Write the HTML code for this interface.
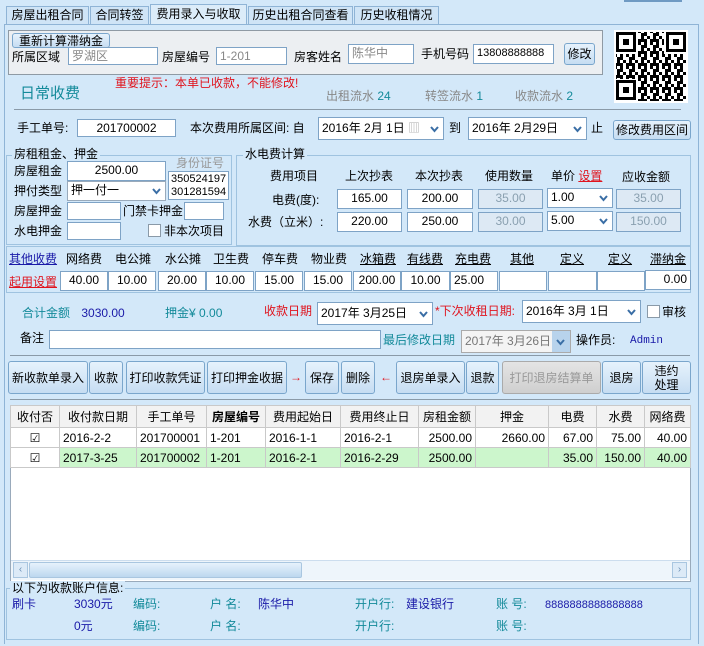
<!DOCTYPE html>
<html><head><meta charset="utf-8">
<style>
*{box-sizing:border-box;margin:0;padding:0}
body{width:704px;height:646px;overflow:hidden;background:#d3e8f9;font-family:"Liberation Sans","Noto Sans CJK SC",sans-serif;font-size:12px;color:#000;position:relative}
.a{position:absolute;white-space:nowrap;line-height:14px}
.in{position:absolute;background:#fff;border:1px solid #7ea3c6;font-size:12px;line-height:16px;padding:0 3px;white-space:nowrap;overflow:hidden}
.dis{background:#dde9f4;color:#8aa0b0;text-align:center}
.c{text-align:center}.r{text-align:right}
.btn{position:absolute;border:1px solid #7aa6cc;border-radius:3px;background:linear-gradient(#e6f2fc,#c6ddf2);text-align:center;font-size:12px;color:#000;display:flex;align-items:center;justify-content:center;line-height:14px;white-space:nowrap}
.tab{position:absolute;top:6px;height:19px;border:1px solid #8fb4d6;border-bottom:none;background:#cfe4f6;font-size:12px;line-height:17px;text-align:center;white-space:nowrap}
.teal{color:#138a9a}.blue{color:#1a1aa8}.red{color:#e0141e}.gray{color:#888}
.dd{position:absolute;right:4px;top:3px;width:9px;height:9px}
.fs{position:absolute;border:1px solid #9fc3e0}
.leg{position:absolute;background:#d3e8f9;padding:0 2px;font-size:12px;line-height:14px}
table{border-collapse:collapse;position:absolute;left:10px;top:405px;font-size:12px}
td{border:1px solid #c9c9c9;height:20px;padding:0 3px;white-space:nowrap}
th{border:1px solid #c9c9c9;height:22px;background:#f2f2f2;font-weight:normal;padding:0;white-space:nowrap}
.g td{background:#ccf6cc}
.ul{text-decoration:underline}
</style></head><body>
<div class="a" style="left:624px;top:0;width:58px;height:2px;background:#6f9ac3"></div>
<div class="tab" style="left:6px;width:83px">房屋出租合同</div>
<div class="tab" style="left:90px;width:59px">合同转签</div>
<div class="tab" style="left:150px;top:4px;height:21px;width:97px;background:#dcecf9;line-height:19px">费用录入与收取</div>
<div class="tab" style="left:248px;width:105px">历史出租合同查看</div>
<div class="tab" style="left:354px;width:85px">历史收租情况</div>
<div class="a" style="left:4px;top:24px;width:695px;height:620px;border:1px solid #8fb4d6;border-bottom:none"></div>
<div class="a" style="left:8px;top:30px;width:595px;height:45px;background:#eceff2;border:1px solid #8f9aa4"></div>
<div class="btn" style="left:12px;top:33px;width:98px;height:15px">重新计算滞纳金</div>
<div class="a" style="left:12px;top:50px">所属区域</div>
<div class="in" style="left:68px;top:47px;width:90px;height:18px;color:#888">罗湖区</div>
<div class="a" style="left:162px;top:50px">房屋编号</div>
<div class="in" style="left:216px;top:47px;width:71px;height:18px;color:#888">1-201</div>
<div class="a" style="left:294px;top:50px">房客姓名</div>
<div class="in" style="left:348px;top:44px;width:66px;height:20px;color:#888">陈华中</div>
<div class="a" style="left:421px;top:47px">手机号码</div>
<div class="in" style="left:473px;top:44px;width:81px;height:20px;font-size:11px">13808888888</div>
<div class="btn" style="left:564px;top:43px;width:31px;height:22px">修改</div>
<svg class="a" style="left:614px;top:30px" width="74" height="73" viewBox="0 0 74 73">
<defs><pattern id="q" width="12" height="12" patternUnits="userSpaceOnUse">
<rect x="0" y="0" width="3" height="3"/><rect x="6" y="0" width="3" height="6"/><rect x="3" y="3" width="3" height="3"/><rect x="9" y="6" width="3" height="3"/><rect x="0" y="9" width="6" height="3"/><rect x="6" y="9" width="3" height="3"/><rect x="3" y="6" width="3" height="3"/></pattern></defs>
<rect width="74" height="73" fill="#fff"/>
<rect x="2" y="2" width="70" height="69" fill="url(#q)"/>
<g fill="#fff"><rect x="1" y="1" width="23" height="23"/><rect x="50" y="1" width="23" height="23"/><rect x="1" y="49" width="23" height="23"/></g>
<g fill="none" stroke="#000" stroke-width="3"><rect x="3.5" y="3.5" width="17" height="17"/><rect x="53.5" y="3.5" width="17" height="17"/><rect x="3.5" y="51.5" width="17" height="17"/></g>
<rect x="9" y="9" width="6" height="6"/><rect x="59" y="9" width="6" height="6"/><rect x="9" y="57" width="6" height="6"/>
</svg>
<div class="a red" style="left:115px;top:76px">重要提示：本单已收款，不能修改!</div>
<div class="a teal" style="left:20px;top:85px;font-size:15px;line-height:18px">日常收费</div>
<div class="a gray" style="left:326px;top:89px">出租流水 <span class="teal">24</span></div>
<div class="a gray" style="left:425px;top:89px">转签流水 <span class="teal">1</span></div>
<div class="a gray" style="left:515px;top:89px">收款流水 <span class="teal">2</span></div>
<div class="a" style="left:14px;top:109px;width:667px;height:1px;background:#8a9aa8"></div>
<div class="a" style="left:17px;top:121px">手工单号:</div>
<div class="in c" style="left:77px;top:119px;width:99px;height:18px">201700002</div>
<div class="a" style="left:190px;top:121px">本次费用所属区间: 自</div>
<div class="in" style="left:318px;top:117px;width:126px;height:23px;line-height:21px">2016年 2月 1日 <span style="color:#aaa">▥</span><svg class="dd" style="top:7px" viewBox="0 0 9 9"><path d="M1 2l3.5 4 3.5-4" stroke="#3a6ea5" stroke-width="2" fill="none"/></svg></div>
<div class="a" style="left:449px;top:121px">到</div>
<div class="in" style="left:468px;top:117px;width:119px;height:23px;line-height:21px">2016年 2月29日<svg class="dd" style="top:7px" viewBox="0 0 9 9"><path d="M1 2l3.5 4 3.5-4" stroke="#3a6ea5" stroke-width="2" fill="none"/></svg></div>
<div class="a" style="left:591px;top:121px">止</div>
<div class="btn" style="left:613px;top:120px;width:78px;height:20px">修改费用区间</div>
<div class="fs" style="left:6px;top:155px;width:226px;height:90px"></div>
<div class="leg" style="left:12px;top:147px">房租租金、押金</div>
<div class="a" style="left:14px;top:164px">房屋租金</div>
<div class="in c" style="left:67px;top:161px;width:99px;height:20px">2500.00</div>
<div class="a" style="left:176px;top:156px;color:#999">身份证号</div>
<div class="in" style="left:168px;top:171px;width:61px;height:29px;line-height:13px;padding:1px 2px;font-size:11px">350524197<br>301281594</div>
<div class="a" style="left:14px;top:184px">押付类型</div>
<div class="in" style="left:67px;top:181px;width:99px;height:20px;border-color:#9ab">押一付一<svg class="dd" style="top:5px" viewBox="0 0 9 9"><path d="M1 2l3.5 4 3.5-4" stroke="#3a6ea5" stroke-width="2" fill="none"/></svg></div>
<div class="a" style="left:14px;top:204px">房屋押金</div>
<div class="in" style="left:67px;top:202px;width:54px;height:18px"></div>
<div class="a" style="left:123px;top:204px">门禁卡押金</div>
<div class="in" style="left:184px;top:202px;width:40px;height:18px"></div>
<div class="a" style="left:14px;top:224px">水电押金</div>
<div class="in" style="left:67px;top:222px;width:54px;height:18px"></div>
<div class="a" style="left:148px;top:224px;width:13px;height:13px;background:#fff;border:1px solid #8a9aa8"></div>
<div class="a" style="left:164px;top:224px">非本次项目</div>
<div class="fs" style="left:236px;top:155px;width:455px;height:91px"></div>
<div class="leg" style="left:243px;top:147px">水电费计算</div>
<div class="a" style="left:270px;top:169px">费用项目</div>
<div class="a" style="left:345px;top:169px">上次抄表</div>
<div class="a" style="left:415px;top:169px">本次抄表</div>
<div class="a" style="left:485px;top:169px">使用数量</div>
<div class="a" style="left:551px;top:169px">单价 <span class="red ul">设置</span></div>
<div class="a" style="left:622px;top:170px">应收金额</div>
<div class="a" style="left:272px;top:193px">电费(度):</div>
<div class="a" style="left:248px;top:215px">水费（立米）:</div>
<div class="in c" style="left:337px;top:189px;width:65px;height:20px">165.00</div>
<div class="in c" style="left:407px;top:189px;width:66px;height:20px">200.00</div>
<div class="in dis" style="left:478px;top:189px;width:65px;height:20px">35.00</div>
<div class="in" style="left:547px;top:188px;width:66px;height:20px">1.00<svg class="dd" style="top:5px" viewBox="0 0 9 9"><path d="M1 2l3.5 4 3.5-4" stroke="#3a6ea5" stroke-width="2" fill="none"/></svg></div>
<div class="in dis" style="left:616px;top:189px;width:65px;height:20px">35.00</div>
<div class="in c" style="left:337px;top:212px;width:65px;height:20px">220.00</div>
<div class="in c" style="left:407px;top:212px;width:66px;height:20px">250.00</div>
<div class="in dis" style="left:478px;top:212px;width:65px;height:20px">30.00</div>
<div class="in" style="left:547px;top:211px;width:66px;height:20px">5.00<svg class="dd" style="top:5px" viewBox="0 0 9 9"><path d="M1 2l3.5 4 3.5-4" stroke="#3a6ea5" stroke-width="2" fill="none"/></svg></div>
<div class="in dis" style="left:616px;top:212px;width:65px;height:20px">150.00</div>
<div class="fs" style="left:6px;top:246px;width:685px;height:47px"></div>
<div class="a blue ul" style="left:9px;top:252px">其他收费</div>
<div class="a red ul" style="left:9px;top:275px">起用设置</div>
<div class="a" style="left:66px;top:252px">网络费</div>
<div class="a" style="left:115px;top:252px">电公摊</div>
<div class="a" style="left:165px;top:252px">水公摊</div>
<div class="a" style="left:213px;top:252px">卫生费</div>
<div class="a" style="left:262px;top:252px">停车费</div>
<div class="a" style="left:311px;top:252px">物业费</div>
<div class="a ul" style="left:360px;top:252px">冰箱费</div>
<div class="a ul" style="left:407px;top:252px">有线费</div>
<div class="a ul" style="left:455px;top:252px">充电费</div>
<div class="a ul" style="left:510px;top:252px">其他</div>
<div class="a ul" style="left:560px;top:252px">定义</div>
<div class="a ul" style="left:608px;top:252px">定义</div>
<div class="a ul" style="left:650px;top:252px">滞纳金</div>
<div class="in c" style="left:60px;top:271px;width:48px;height:20px">40.00</div>
<div class="in c" style="left:108px;top:271px;width:48px;height:20px">10.00</div>
<div class="in c" style="left:158px;top:271px;width:48px;height:20px">20.00</div>
<div class="in c" style="left:206px;top:271px;width:48px;height:20px">10.00</div>
<div class="in c" style="left:255px;top:271px;width:48px;height:20px">15.00</div>
<div class="in c" style="left:304px;top:271px;width:48px;height:20px">15.00</div>
<div class="in c" style="left:353px;top:271px;width:48px;height:20px">200.00</div>
<div class="in c" style="left:401px;top:271px;width:49px;height:20px">10.00</div>
<div class="in" style="left:450px;top:271px;width:48px;height:20px">25.00</div>
<div class="in" style="left:499px;top:271px;width:48px;height:20px"></div>
<div class="in" style="left:548px;top:271px;width:49px;height:20px"></div>
<div class="in" style="left:597px;top:271px;width:48px;height:20px"></div>
<div class="in r" style="left:645px;top:270px;width:46px;height:20px">0.00</div>
<div class="a teal" style="left:22px;top:306px">合计金额 <span class="blue" style="margin-left:8px">3030.00</span></div>
<div class="a teal" style="left:165px;top:306px">押金¥ 0.00</div>
<div class="a red" style="left:264px;top:304px">收款日期</div>
<div class="in" style="left:317px;top:302px;width:116px;height:23px;line-height:21px">2017年 3月25日<svg class="dd" style="top:7px" viewBox="0 0 9 9"><path d="M1 2l3.5 4 3.5-4" stroke="#3a6ea5" stroke-width="2" fill="none"/></svg></div>
<div class="a red" style="left:435px;top:304px">*下次收租日期:</div>
<div class="in" style="left:522px;top:300px;width:119px;height:23px;line-height:21px">2016年 3月 1日<svg class="dd" style="top:7px" viewBox="0 0 9 9"><path d="M1 2l3.5 4 3.5-4" stroke="#3a6ea5" stroke-width="2" fill="none"/></svg></div>
<div class="a" style="left:647px;top:305px;width:13px;height:13px;background:#fff;border:1px solid #8a9aa8"></div>
<div class="a" style="left:662px;top:305px">审核</div>
<div class="a" style="left:20px;top:331px">备注</div>
<div class="in" style="left:49px;top:330px;width:332px;height:19px"></div>
<div class="a teal" style="left:383px;top:333px">最后修改日期</div>
<div class="in" style="left:461px;top:330px;width:110px;height:23px;line-height:21px;color:#777;background:#f4f4f4;border-color:#aaa">2017年 3月26日<span style="position:absolute;right:0;top:0;width:18px;height:21px;background:#b8d3ec"></span><svg class="dd" style="top:7px;right:5px" viewBox="0 0 9 9"><path d="M1 2l3.5 4 3.5-4" stroke="#3a6ea5" stroke-width="2" fill="none"/></svg></div>
<div class="a" style="left:576px;top:333px">操作员:</div>
<div class="a blue" style="left:630px;top:334px;font-family:'Liberation Mono',monospace;font-size:11px">Admin</div>
<div class="a" style="left:10px;top:355px;width:680px;height:1px;background:#8a9aa8"></div>
<div class="btn" style="left:8px;top:361px;width:80px;height:33px">新收款单录入</div>
<div class="btn" style="left:89px;top:361px;width:34px;height:33px">收款</div>
<div class="btn" style="left:126px;top:361px;width:79px;height:33px">打印收款凭证</div>
<div class="btn" style="left:207px;top:361px;width:80px;height:33px">打印押金收据</div>
<div class="a red" style="left:290px;top:370px">→</div>
<div class="btn" style="left:305px;top:361px;width:34px;height:33px">保存</div>
<div class="btn" style="left:341px;top:361px;width:34px;height:33px">删除</div>
<div class="a red" style="left:380px;top:370px">←</div>
<div class="btn" style="left:396px;top:361px;width:69px;height:33px">退房单录入</div>
<div class="btn" style="left:466px;top:361px;width:33px;height:33px">退款</div>
<div class="btn" style="left:502px;top:361px;width:99px;height:33px;color:#999;background:linear-gradient(#e4e4e4,#cfcfcf);border-color:#aaa">打印退房结算单</div>
<div class="btn" style="left:602px;top:361px;width:39px;height:33px">退房</div>
<div class="btn" style="left:642px;top:361px;width:49px;height:33px;white-space:normal">违约<br>处理</div>
<div class="a" style="left:10px;top:399px;width:680px;height:1px;background:#8a9aa8"></div>
<div class="a" style="left:10px;top:405px;width:681px;height:177px;background:#fff;border:1px solid #9ab"></div>
<table>
<tr><th style="width:49px">收付否</th><th style="width:77px">收付款日期</th><th style="width:70px">手工单号</th><th style="width:59px;font-weight:bold">房屋编号</th><th style="width:75px">费用起始日</th><th style="width:78px">费用终止日</th><th style="width:57px">房租金额</th><th style="width:73px">押金</th><th style="width:48px">电费</th><th style="width:48px">水费</th><th style="width:46px">网络费</th></tr>
<tr><td class="c">☑</td><td>2016-2-2</td><td>201700001</td><td>1-201</td><td>2016-1-1</td><td>2016-2-1</td><td class="r">2500.00</td><td class="r">2660.00</td><td class="r">67.00</td><td class="r">75.00</td><td class="r">40.00</td></tr>
<tr class="g"><td class="c" style="background:#fff">☑</td><td>2017-3-25</td><td>201700002</td><td>1-201</td><td>2016-2-1</td><td>2016-2-29</td><td class="r">2500.00</td><td></td><td class="r">35.00</td><td class="r">150.00</td><td class="r">40.00</td></tr>
</table>
<div class="a" style="left:11px;top:560px;width:679px;height:20px;background:#eef5fb;border-top:1px solid #cde"></div>
<div class="a" style="left:13px;top:562px;width:15px;height:16px;border:1px solid #a9c6e0;background:#dceaf7;color:#6a8fb5;font-size:10px;text-align:center">‹</div>
<div class="a" style="left:29px;top:562px;width:273px;height:16px;border:1px solid #a9c6e0;border-radius:2px;background:linear-gradient(#e6f2fc,#bcd7ef)"></div>
<div class="a" style="left:672px;top:562px;width:15px;height:16px;border:1px solid #a9c6e0;background:#dceaf7;color:#6a8fb5;font-size:10px;text-align:center">›</div>
<div class="fs" style="left:6px;top:588px;width:685px;height:52px"></div>
<div class="leg" style="left:10px;top:581px">以下为收款账户信息:</div>
<div class="a blue" style="left:12px;top:597px">刷卡</div>
<div class="a blue" style="left:74px;top:597px">3030元</div>
<div class="a teal" style="left:133px;top:597px">编码:</div>
<div class="a teal" style="left:210px;top:597px">户 名:</div>
<div class="a blue" style="left:258px;top:597px">陈华中</div>
<div class="a teal" style="left:355px;top:597px">开户行:</div>
<div class="a blue" style="left:406px;top:597px">建设银行</div>
<div class="a teal" style="left:496px;top:597px">账 号:</div>
<div class="a blue" style="left:545px;top:598px;font-size:11px">8888888888888888</div>
<div class="a blue" style="left:74px;top:619px">0元</div>
<div class="a teal" style="left:133px;top:619px">编码:</div>
<div class="a teal" style="left:210px;top:619px">户 名:</div>
<div class="a teal" style="left:355px;top:619px">开户行:</div>
<div class="a teal" style="left:496px;top:619px">账 号:</div>
</body></html>
